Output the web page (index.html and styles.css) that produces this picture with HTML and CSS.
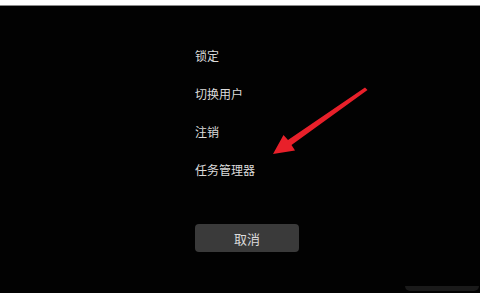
FILE: index.html
```html
<!DOCTYPE html>
<html lang="zh-CN">
<head>
  <meta charset="UTF-8">
  <title>安全选项</title>
  <link rel="stylesheet" href="styles.css">
</head>
<body>

  <!-- Pantalla negra con opciones -->
  <div class="pantalla">
    <div class="menu">
      <div class="opcion">锁定</div>
      <div class="opcion">切换用户</div>
      <div class="opcion">注销</div>
      <div class="opcion">任务管理器</div>
      <button class="boton">取消</button>
    </div>

    <!-- Flecha roja -->
    <svg class="flecha" width="480" height="287" viewBox="0 6 480 287">
      <path d="M365 87.5 L367.5 90 L291.5 145 L295 150.5 L273 154 L283.5 135 L288 140 Z" fill="#e8202a"/>
    </svg>

    <div class="sombra"></div>
  </div>

</body>
</html>
```

FILE: styles.css
```css
body {
  margin: 0;
  background: #fff;
  font-family: "Noto Sans CJK SC", "Noto Sans", sans-serif;
}

.pantalla {
  position: relative;
  margin-top: 5px;
  height: 287px;
  background: #020202;
  border-top: 1px solid #8a8a8a;
  overflow: hidden;
}

.menu {
  display: flex;
  flex-direction: column;
  align-items: flex-start;
  padding: 31px 0 0 195px;
}

.opcion {
  color: #dcdcdc;
  font-size: 12px;
  line-height: 38px;
}

.boton {
  margin-top: 35px;
  width: 104px;
  height: 28px;
  border: none;
  border-radius: 4px;
  background: #3a3a3a;
  color: #dcdcdc;
  font-family: inherit;
  font-size: 13px;
}

.flecha {
  position: absolute;
  left: 0;
  top: 0;
}

.sombra {
  position: absolute;
  left: 405px;
  bottom: 2px;
  width: 74px;
  height: 5px;
  background: #1a1a1a;
  border-radius: 0 0 30px 30px;
}
```
